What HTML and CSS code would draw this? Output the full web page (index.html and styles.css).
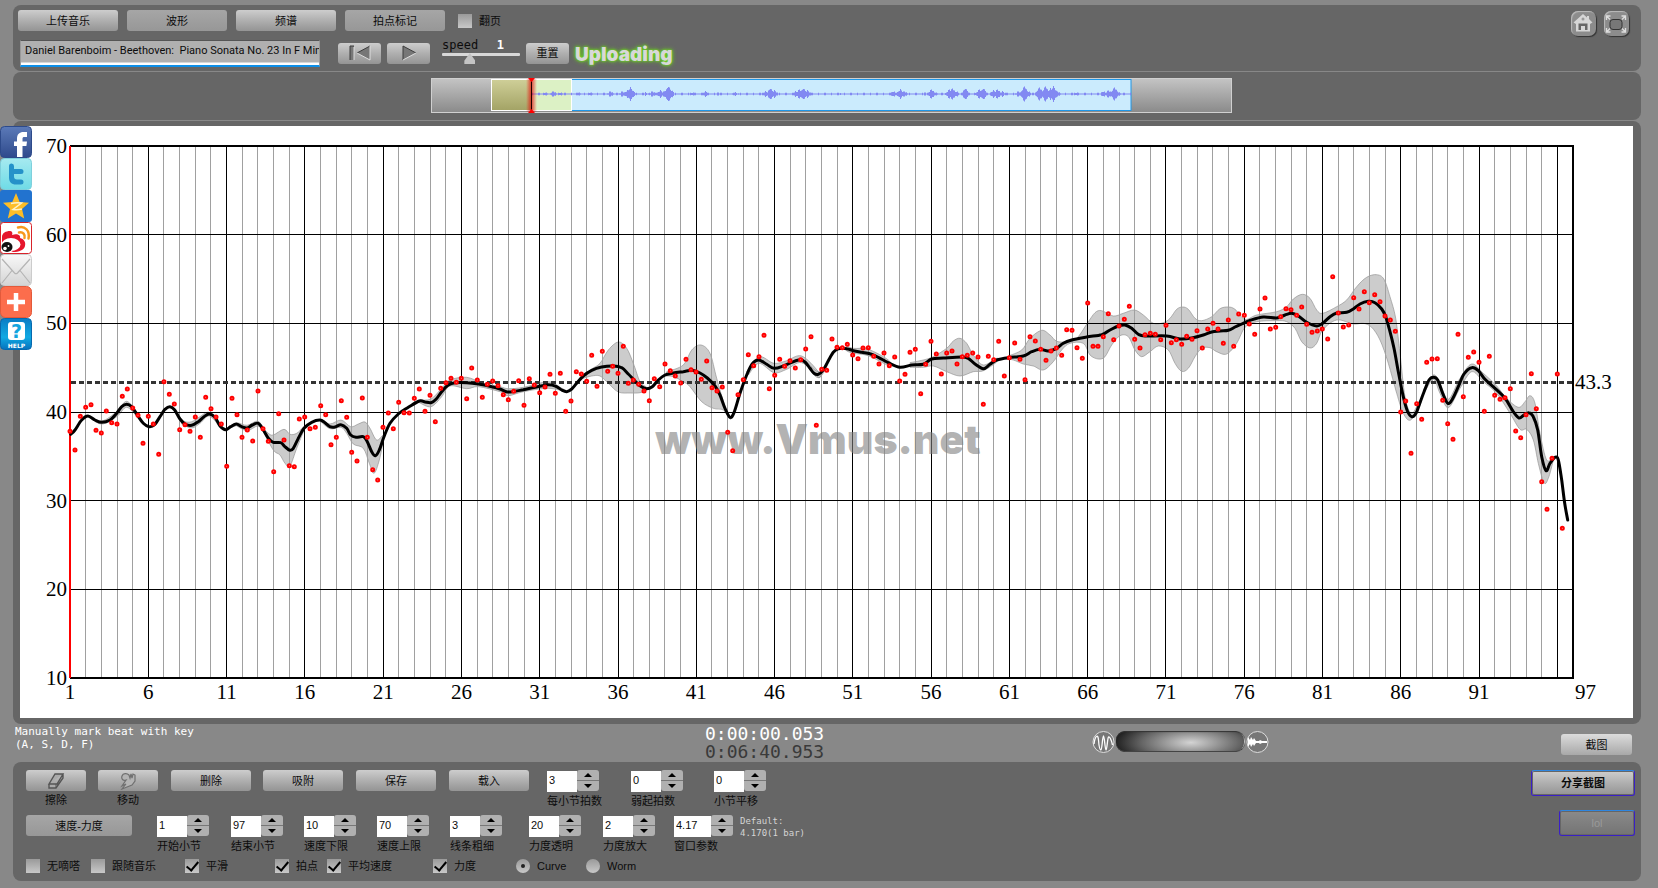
FILE: index.html
```
<!DOCTYPE html>
<html lang="zh">
<head>
<meta charset="utf-8">
<title>Vmus.net</title>
<link rel="stylesheet" href="styles.css">
</head>
<body>
<nav class="share" aria-label="Share">
  <a href="#facebook" aria-label="Facebook"><svg viewBox="0 0 32 32"><defs><linearGradient id="fb" x2="0" y2="1"><stop stop-color="#5b7ab8"/><stop offset="1" stop-color="#2f4a8c"/></linearGradient></defs><rect x=".5" y=".5" width="31" height="31" rx="4" fill="url(#fb)" stroke="#2d4a8a"/><path d="M17 31V20h-3v-4.500h3v-2.500c0-5 2.500-7 6.500-7H27v5h-2.500c-1.600 0-2 .6-2 2v2.500H27l-.6 4.500h-3.900v11z" fill="#fff"/></svg></a>
  <a href="#twitter" aria-label="Twitter"><svg viewBox="0 0 32 32"><defs><linearGradient id="tw" x2="0" y2="1"><stop stop-color="#a6eaf0"/><stop offset="1" stop-color="#6fdbe6"/></linearGradient></defs><rect x=".5" y=".5" width="31" height="31" rx="4" fill="url(#tw)" stroke="#7fd0dc"/><path d="M9 8a2.500 2.500 0 0 1 5 0v3h7a2.500 2.500 0 0 1 0 5h-7v2.500c0 2 1 3 3 3h4a2.500 2.500 0 0 1 0 5h-5c-4.500 0-7-2.500-7-7z" fill="#2592c9"/></svg></a>
  <a href="#qzone" aria-label="Qzone"><svg viewBox="0 0 32 32"><rect width="32" height="32" rx="3" fill="#2273cf"/><path d="M16 3l3.700 9 9.300.8-7 6.200 2.200 9.400L16 23.500 7.800 28.400 10 19l-7-6.200 9.300-.8z" fill="#fdbd27"/><path d="M11 13.500c4-.8 7-.8 10.500-.4L13 19.500c3 .4 5.500.3 9-.5" fill="none" stroke="#fff3c8" stroke-width="1.500"/></svg></a>
  <a href="#weibo" aria-label="Weibo"><svg viewBox="0 0 32 32"><rect x=".5" y=".5" width="31" height="31" rx="3" fill="#fff" stroke="#d8232a"/><path d="M2 15c0-4 4-6 8-6 2 0 3 2 2 4 5-2 9 0 8 3 4 1 6 4 5 8-1 4-6 6-12 6L2 24z" fill="#e6162d"/><ellipse cx="11" cy="22.500" rx="9.500" ry="6.500" fill="#fff"/><ellipse cx="7" cy="25" rx="5.500" ry="5" fill="#111"/><circle cx="5" cy="26.500" r="1.800" fill="#fff"/><circle cx="8.500" cy="24" r=".9" fill="#fff"/><path d="M18 5.500c7-2 12 3 10.500 11M19 10.500c4-1 6.500 2 5.500 5.500" fill="none" stroke="#f7981d" stroke-width="2.500" stroke-linecap="round"/></svg></a>
  <a href="#mail" aria-label="Mail"><svg viewBox="0 0 32 32"><defs><linearGradient id="ml" x2="0" y2="1"><stop stop-color="#f8f8f8"/><stop offset="1" stop-color="#d4d4d4"/></linearGradient></defs><rect x=".5" y=".5" width="31" height="31" rx="4" fill="url(#ml)" stroke="#ccc"/><path d="M2 5l12.500 14q1.500 1.500 3 0L30 5M2 29l10-12.500M30 29L20 16.500" fill="none" stroke="#b4b4b4" stroke-width="1.200"/></svg></a>
  <a href="#more" aria-label="More"><svg viewBox="0 0 32 32"><rect x=".5" y=".5" width="31" height="31" rx="5" fill="#fc6d4c" stroke="#e3593a"/><path d="M16 7v18M7 16h18" stroke="#fff" stroke-width="4.500"/></svg></a>
  <a href="#help" aria-label="Help"><svg viewBox="0 0 32 32"><defs><linearGradient id="hp" x2="0" y2="1"><stop stop-color="#0a7cc4"/><stop offset=".6" stop-color="#10a9e3"/><stop offset="1" stop-color="#0672bd"/></linearGradient></defs><rect x=".5" y=".5" width="31" height="31" rx="4" fill="url(#hp)" stroke="#0669ae"/><rect x="8" y="4" width="17" height="18" rx="3" fill="#fff"/><text class="help-mark" x="16.500" y="20">?</text><text class="help-word" x="16.500" y="29.500">HELP</text></svg></a>
</nav>

<header class="panel toolbar">
  <div class="toolbar-main">
    <div class="toolbar-row">
      <button class="btn wide">上传音乐</button>
      <button class="btn wide pressed">波形</button>
      <button class="btn wide">频谱</button>
      <button class="btn wide pressed">拍点标记</button>
      <label class="check flip"><input type="checkbox">翻页</label>
    </div>
    <div class="toolbar-row player">
      <input class="track-title" type="text" aria-label="Track" value="Daniel Barenboim - Beethoven:  Piano Sonata No. 23 In F Min">
      <button class="btn small" aria-label="Previous"><svg width="24" height="18" viewBox="0 0 24 18"><path d="M2 2h4v14H2zM22 2L9 9l13 7z" fill="#777"/><path d="M2 16V2h4M22 2L9 9" fill="none" stroke="#3c3c3c"/><path d="M6 3v13M22 2v14L9 9" fill="none" stroke="#ddd"/></svg></button>
      <button class="btn small" aria-label="Play"><svg width="24" height="18" viewBox="0 0 24 18"><path d="M6 2l13 7-13 7z" fill="#777"/><path d="M6 16V2l13 7" fill="none" stroke="#3c3c3c"/><path d="M19 9L6 16" stroke="#ddd"/></svg></button>
      <div class="speed">
        <div class="speed-head"><label for="speed">speed</label><output>1</output></div>
        <input id="speed" type="range" min="0" max="3" step="0.1" value="1">
      </div>
      <button class="btn small">重置</button>
      <span class="status">Uploading</span>
    </div>
  </div>
  <div class="window-tools">
    <button class="tool" aria-label="Home"><svg width="24" height="24" viewBox="0 0 24 24"><path d="M12 2L2.500 10.500 5 12v7.500h14V12l2.500-1.500L18 7V4h-2v1.500z" fill="#d6d6d6"/><path d="M7.500 18v-6.500h9V18h-2.500v-4h-4v4z" fill="#666"/><circle cx="12" cy="7" r="1.500" fill="#999"/></svg></button>
    <button class="tool" aria-label="Full screen"><svg width="24" height="24" viewBox="0 0 24 24"><rect x="6" y="7.500" width="12" height="10" rx="3" fill="#777" stroke="#333"/><path d="M2.500 8V4h4M17.500 4h4v4M21.500 16v4h-4M6.500 20h-4v-4M3 4.500l3 3M21 4.500l-3 3M3 19.500l3-3M21 19.500l-3-3" fill="none" stroke="#ddd" stroke-width="1.300"/></svg></button>
  </div>
</header>

<section class="panel overview">
  <svg id="overview" viewBox="431 78 801 35" width="801" height="35" role="img" aria-label="Waveform overview">
    <defs>
      <linearGradient id="trackFill" x2="0" y2="1"><stop stop-color="#c4c4c4"/><stop offset="1" stop-color="#8a8a8a"/></linearGradient>
      <linearGradient id="loopFill" x2="0" y2="1"><stop stop-color="#cfcf98"/><stop offset="1" stop-color="#a3a365"/></linearGradient>
      <linearGradient id="glow"><stop stop-color="#f00" stop-opacity="0"/><stop offset=".5" stop-color="#d00" stop-opacity=".7"/><stop offset="1" stop-color="#f00" stop-opacity="0"/></linearGradient>
    </defs>
    <rect x="431.500" y="78.500" width="800" height="34" fill="url(#trackFill)" stroke="#d0d0d0"/>
    <rect x="531" y="79.500" width="600" height="31" fill="#cbebfd" stroke="#1f97e8"/>
    <rect x="491.500" y="79.500" width="40" height="31" fill="url(#loopFill)"/>
    <rect x="531.500" y="79.500" width="40" height="31" fill="#dcf1c5"/>
    <rect x="491.500" y="79.500" width="80" height="31" fill="none" stroke="#fff"/>
    <path id="wave" fill="#8289f2"/>
    <rect x="526" y="79" width="11" height="33" fill="url(#glow)"/>
    <path d="M531.500 79v33" stroke="#200" /><path d="M528 78h7l-3.500 4zM528 113h7l-3.500-4z" fill="#f00"/>
  </svg>
</section>

<main class="panel chart-panel">
  <svg id="chart" viewBox="20 126 1613 592" role="img" aria-label="Tempo chart">
    <path id="bands" class="band"/>
    <path id="minor" class="grid-minor"/>
    <path id="major" class="grid-major"/>
    <path class="frame" d="M70 146H1573V678H70"/>
    <path class="cursor" d="M70 146V678"/>
    <text class="watermark" x="818" y="454">www.Vmus.net</text>
    <path class="average" d="M71 382.500H1575"/>
    <path id="curve" class="curve"/>
    <path id="beats" class="beat"/>
    <path id="beatCores" class="beat-core"/>
    <g id="labels" class="axis"></g>
    <text class="axis" x="1575" y="389">43.3</text>
  </svg>
</main>

<section class="strip">
  <p class="hint">Manually mark beat with key<br>(A, S, D, F)</p>
  <div class="clock"><time>0:00:00.053</time><time class="total">0:06:40.953</time></div>
  <div class="zoomer">
    <svg width="23" height="24" viewBox="0 0 23 24"><circle cx="11.500" cy="12" r="10.500" fill="#777" stroke="#ddd"/><path d="M2 14c1-8 4-11 4.500-4s1.500 10 2.500 10 1.500-14 2.500-14 1.500 14 2.500 14 1.500-12 2.500-13 3 3 4 8" fill="none" stroke="#fff" stroke-width="1.300"/></svg>
    <div class="wheel"></div>
    <svg width="23" height="24" viewBox="0 0 23 24"><circle cx="11.500" cy="12" r="10.500" fill="#777" stroke="#ddd"/><path d="M2 12V7l2 3 1-3 2 3 1-2 2 3h3l1-1 2 1h5v2h-5l-2 1-1-1h-3l-2 3-1-2-2 3-1-3-2 3z" fill="#fff"/></svg>
  </div>
  <button class="btn shot">截图</button>
</section>

<section class="panel controls">
  <div class="control-rows">
    <div class="row row-edit">
      <div class="field"><button class="btn icon-btn" aria-labelledby="erase"><svg width="22" height="18" viewBox="0 0 22 18"><path d="M4 12L10 2h8l-6 10zM4 12v4h7l7-10V2" fill="#aaa" stroke="#555" stroke-width="1.400"/><path d="M11 16v-4" stroke="#555"/></svg></button><span id="erase" class="center">擦除</span></div>
      <div class="field"><button class="btn icon-btn" aria-labelledby="move"><svg width="22" height="18" viewBox="0 0 22 18"><path d="M9 8c-3 1-5-1-4-4s5-3 7-1l1 3 1-4 1 4 1-4 2 1v6l-3 4-5 2-5 2 4-5-4 2z" fill="#b4b4b4" stroke="#707070" stroke-width="1.200"/></svg></button><span id="move" class="center">移动</span></div>
      <div><button class="btn medium">删除</button></div>
      <div><button class="btn medium">吸附</button></div>
      <div><button class="btn medium">保存</button></div>
      <div><button class="btn medium">载入</button></div>
      <div class="field"><span class="spin"><input id="f1" type="text" value="3"><span class="steps"><button aria-label="+"></button><button aria-label="-"></button></span></span><label for="f1">每小节拍数</label></div>
      <div class="field"><span class="spin"><input id="f2" type="text" value="0"><span class="steps"><button aria-label="+"></button><button aria-label="-"></button></span></span><label for="f2">弱起拍数</label></div>
      <div class="field"><span class="spin"><input id="f3" type="text" value="0"><span class="steps"><button aria-label="+"></button><button aria-label="-"></button></span></span><label for="f3">小节平移</label></div>
    </div>
    <div class="row row-range">
      <div><button class="btn mode pressed">速度-力度</button></div>
      <div class="field"><span class="spin"><input id="g1" type="text" value="1"><span class="steps"><button aria-label="+"></button><button aria-label="-"></button></span></span><label for="g1">开始小节</label></div>
      <div class="field"><span class="spin"><input id="g2" type="text" value="97"><span class="steps"><button aria-label="+"></button><button aria-label="-"></button></span></span><label for="g2">结束小节</label></div>
      <div class="field"><span class="spin"><input id="g3" type="text" value="10"><span class="steps"><button aria-label="+"></button><button aria-label="-"></button></span></span><label for="g3">速度下限</label></div>
      <div class="field"><span class="spin"><input id="g4" type="text" value="70"><span class="steps"><button aria-label="+"></button><button aria-label="-"></button></span></span><label for="g4">速度上限</label></div>
      <div class="field"><span class="spin"><input id="g5" type="text" value="3"><span class="steps"><button aria-label="+"></button><button aria-label="-"></button></span></span><label for="g5">线条粗细</label></div>
      <div class="field"><span class="spin"><input id="g6" type="text" value="20"><span class="steps"><button aria-label="+"></button><button aria-label="-"></button></span></span><label for="g6">力度透明</label></div>
      <div class="field"><span class="spin"><input id="g7" type="text" value="2"><span class="steps"><button aria-label="+"></button><button aria-label="-"></button></span></span><label for="g7">力度放大</label></div>
      <div class="field"><span class="spin long"><input id="g8" type="text" value="4.17"><span class="steps"><button aria-label="+"></button><button aria-label="-"></button></span></span><label for="g8">窗口参数</label></div>
      <p class="default">Default:<br>4.170(1 bar)</p>
    </div>
    <div class="row row-flags">
      <label class="check"><input type="checkbox">无嘀嗒</label>
      <label class="check"><input type="checkbox">跟随音乐</label>
      <label class="check"><input type="checkbox" checked>平滑</label>
      <label class="check"><input type="checkbox" checked>拍点</label>
      <label class="check"><input type="checkbox" checked>平均速度</label>
      <label class="check"><input type="checkbox" checked>力度</label>
      <label class="check"><input type="radio" name="view" checked>Curve</label>
      <label class="check"><input type="radio" name="view">Worm</label>
    </div>
  </div>
  <div class="actions">
    <button class="btn ring share-shot">分享截图</button>
    <button class="btn ring lol" disabled>lol</button>
  </div>
</section>
<script src="chart.js"></script>
</body>
</html>
```
FILE: styles.css
```
* { box-sizing: border-box; }

body {
  margin: 0;
  padding: 5px 17px 7px 13px;
  min-height: 100vh;
  display: flex;
  flex-direction: column;
  gap: 1px;
  position: relative;
  background: #888;
  color: #0c0c0c;
  font-family: "Liberation Sans", "Noto Sans CJK SC", sans-serif;
  font-size: 11px;
}

p { margin: 0; }
button, input { font: inherit; color: inherit; }
button { border: 0; padding: 0; }
svg { display: block; }

.panel { background: #666; border-radius: 8px; }

.share { position: absolute; left: 0; top: 126px; width: 32px; z-index: 1; }
.share a { display: block; }
.help-mark { font: bold 19px "DejaVu Sans", sans-serif; fill: #13a5df; text-anchor: middle; }
.help-word { font: bold 6px "DejaVu Sans", sans-serif; fill: #fff; text-anchor: middle; }

.btn {
  height: 21px;
  border-radius: 3px;
  background: linear-gradient(#cdcdcd, #b2b2b2 45%, #949494);
  display: flex;
  align-items: center;
  justify-content: center;
  line-height: 16px;
}
.pressed { background: linear-gradient(#a6a6a6, #979797); }
.wide { width: 100px; }
.medium { width: 80px; }
.icon-btn { width: 60px; }
.small { width: 43px; }
.mode { width: 106px; }
.shot { width: 71px; background: linear-gradient(#dcdcdc, #a8a8a8); }

.toolbar { display: flex; justify-content: space-between; padding: 5px; }
.toolbar-main { display: flex; flex-direction: column; gap: 9px; }
.toolbar-row { display: flex; align-items: center; gap: 9px; }
.flip { margin-left: 4px; }
.player { height: 26px; gap: 6px; padding-left: 2px; }
.track-title {
  width: 300px;
  height: 27px;
  margin-right: 12px;
  padding: 0 0 4px 4px;
  border: 1px solid #999;
  border-top-color: #555;
  border-bottom: 2px solid #0d8fe8;
  background: linear-gradient(#b0b0b0, #b0b0b0 21px, #fff 22px);
  font-family: Roboto, "Noto Sans CJK SC", sans-serif;
}
.speed { width: 78px; margin: 0 0 0 6px; height: 27px; }
.speed-head {
  display: flex;
  justify-content: space-between;
  width: 62px;
  font: 12px/11px "DejaVu Sans Mono", monospace;
}
.speed-head output { color: #fff; font-weight: bold; }
.speed input { display: block; appearance: none; width: 78px; height: 8px; margin: 0; background: none; }
.speed input::-webkit-slider-runnable-track { height: 3px; background: #d8d8d8; border-radius: 1px; }
.speed input::-webkit-slider-thumb {
  appearance: none;
  width: 11px;
  height: 11px;
  background: #c4c4c4;
  clip-path: polygon(50% 0, 100% 70%, 100% 100%, 0 100%, 0 70%);
}
.status {
  font-family: Inter, "Liberation Sans", sans-serif;
  font-weight: 900;
  font-size: 19px;
  line-height: 22px;
  padding-top: 3px;
  color: #d8d8d8;
  text-shadow: 0 0 2px #6bd022, 0 0 3px #6bd022, 0 0 5px #6bd022;
}
.window-tools { display: flex; gap: 8px; padding: 1px 7px; }
.tool {
  width: 25px;
  height: 25px;
  border-radius: 7px;
  background: #8c8c8c;
  box-shadow: inset 1px 1px 1px #bbb, 1px 1px 1px #333;
}

.overview { display: flex; justify-content: center; padding: 6px 0 7px 9px; }
.chart-panel { padding: 5px 8px 6px 7px; }
#chart { width: 100%; height: auto; background: #fff; }

.grid-minor { stroke: #a0a0a0; shape-rendering: crispEdges; }
.grid-major { stroke: #000; shape-rendering: crispEdges; }
.frame { fill: none; stroke: #000; stroke-width: 2; }
.cursor { stroke: #f00; stroke-width: 2; }
.band { fill: #000; fill-opacity: .2; stroke: #888; stroke-opacity: .6; }
.curve { fill: none; stroke: #000; stroke-width: 3; stroke-linecap: round; stroke-linejoin: round; }
.average { stroke: #333; stroke-width: 3; stroke-dasharray: 5 3; }
.beat { stroke: #f00; stroke-width: 5; stroke-linecap: round; }
.beat-core { stroke: #f99; stroke-width: 1; stroke-linecap: round; }
.axis { font-family: "Liberation Serif", serif; font-size: 21px; fill: #000; }
.watermark {
  font-family: Inter, sans-serif;
  font-weight: 900;
  font-size: 41px;
  fill: #808080;
  fill-opacity: .6;
  text-anchor: middle;
}

.strip {
  display: grid;
  grid-template-columns: 690fr 387fr 469fr auto;
  height: 36px;
  padding: 0 9px 0 2px;
}
.hint { color: #fff; font: 11px/13px "DejaVu Sans Mono", monospace; }
.clock { font: 18px/18px "DejaVu Sans Mono", monospace; color: #fff; }
.clock time { display: block; }
.clock .total { color: #3a3a3a; }
.zoomer { display: flex; align-items: flex-start; gap: 1px; padding-top: 5px; }
.wheel {
  width: 129px;
  height: 21px;
  margin-top: 1px;
  border-radius: 9px;
  background: radial-gradient(ellipse 75px 24px at 58% 55%, #d4d4d4, #666 65%, #222);
  box-shadow: inset 0 1px 1px #333, inset 0 -1px 0 #444, inset -1px 0 0 #ccc;
}
.shot { margin-top: 9px; }

.controls { display: flex; justify-content: space-between; padding: 8px 6px 7px 13px; height: 119px; }
.row { display: grid; justify-items: start; align-items: start; }
.row-edit { grid-template-columns: 72px 73px 92px 93px 93px 98px 84px 83px 60px; height: 45px; }
.row-range { grid-template-columns: 131px 74px 73px 73px 73px 79px 74px 71px 66px auto; height: 44px; }
.row-flags { grid-template-columns: 65px 94px 90px 52px 106px 83px 70px auto; }
.field { display: flex; flex-direction: column; line-height: 18px; white-space: nowrap; }
.field label, .field .center { height: 18px; }
.field .center { text-align: center; }
.spin { display: flex; width: 52px; height: 22px; }
.spin.long { width: 59px; }
.spin input { flex: 1; min-width: 0; margin: 1px 0 0; padding: 0 2px 4px; border: 0; background: #fff; }
.steps { display: grid; width: 22px; height: 21px; gap: 1px; background: #777; border-radius: 3px; overflow: hidden; }
.steps button { background: #b0b0b0; display: flex; align-items: center; justify-content: center; }
.steps button::before { content: ""; border: 4px solid transparent; border-top: 0; border-bottom: 4px solid #000; }
.steps button:last-child::before { transform: rotate(180deg); }
.default { color: #d4d4d4; font: 9px/12px "DejaVu Sans Mono", monospace; }

.check { display: flex; align-items: center; gap: 7px; line-height: 14px; white-space: nowrap; }
.check input {
  appearance: none;
  width: 14px;
  height: 14px;
  margin: 0;
  background: linear-gradient(#9a9a9a, #c8c8c8);
  display: grid;
  place-items: center;
}
.check input[type="radio"] { border-radius: 50%; }
.check input[type="radio"]:checked::before { content: ""; width: 4px; height: 4px; border-radius: 50%; background: #222; }
.check input[type="checkbox"]:checked::before {
  content: "";
  width: 5px;
  height: 10px;
  margin-bottom: 3px;
  border: solid #000;
  border-width: 0 2px 2px 0;
  transform: rotate(40deg);
}

.actions { display: flex; flex-direction: column; align-items: flex-end; gap: 14px; }
.ring {
  height: 26px;
  border: 1px solid #3a1fc8;
  border-top-color: #2f86e0;
  box-shadow: inset 0 0 0 1px #666;
}
.share-shot { width: 104px; font-weight: bold; }
.lol { width: 76px; background: linear-gradient(#8a8a8a, #747474); color: #9a9a9a; }
```
FILE: chart.js
```
// Traces are stored in tiles: [originX, originY, x, y, x, y, ...], three units per pixel.
const unpack = tiles => tiles.flatMap(([ox, oy, ...v]) => {
  const out = [];
  for (let i = 0; i < v.length; i += 2) out.push([ox + v[i] / 3, oy + v[i + 1] / 3]);
  return out;
});

const fmt = p => p[0].toFixed(1) + " " + p[1].toFixed(1);

// Catmull-Rom spline through the points.
function spline(pts) {
  let d = "";
  for (let i = 0; i < pts.length - 1; i++) {
    const a = pts[i - 1] || pts[i], b = pts[i], c = pts[i + 1], e = pts[i + 2] || c;
    d += "C" + fmt([b[0] + (c[0] - a[0]) / 6, b[1] + (c[1] - a[1]) / 6]) + " " +
      fmt([c[0] - (e[0] - b[0]) / 6, c[1] - (e[1] - b[1]) / 6]) + " " + fmt(c);
  }
  return d;
}
const set = (id, d) => document.getElementById(id).setAttribute("d", d);

const curve = unpack([
  [0, 120, 212,943,225,930,245,900,264,888,285,900,305,907,330,900,350,880,365,860,380,853,395,860,412,885,430,910,447,920,463,915,480,890,495,868,510,860,524,870,540,897,555,912,575,916,595,905,612,890,628,882,645,892,660,918,677,929,692,920,709,912,725,920,741,924,757,915,775,910,790,930,805,955,820,967,842,968,855,980,870,991,880,985,895,955,912,925,935,907,960,900,975,908,990,920,1005,921,1023,914,1040,925,1052,945,1068,952,1090,950,1102,965,1115,995,1126,1007,1138,990,1152,950,1170,910,1195,882,1225,862],
  [400, 300, 58,303,75,306,93,308,108,298,125,275,145,255,165,248,200,248,235,252,275,260,300,267,322,276,345,274,370,269,410,261,445,254,468,259,485,270,500,275,515,267,530,250,550,228,575,211,605,201,640,198,665,203,685,222,705,243,722,259,740,266,757,260,775,240,795,225,820,219,850,215,877,211,900,219,922,234,945,258,960,285,975,325,990,352,1002,338,1020,280,1040,225,1058,190,1077,180,1100,193,1122,205,1150,198,1175,187,1200,179],
  [800, 240, 15,366,30,385,42,400,55,403,70,390,85,362,100,337,115,326,140,326,160,332,185,337,210,341,235,352,265,368,300,382,335,375,370,373,395,357,430,354,485,351,505,355,525,372,550,386,570,373,590,360,625,353,670,348,695,335,720,328,745,333,770,325,790,310,815,300,860,291,905,284,930,270,955,258,975,255,995,265,1015,283,1035,288,1100,288,1140,297,1175,294,1210,285,1235,276],
  [1220, 240, 0,273,25,271,45,261,65,252,90,241,130,231,170,234,195,225,215,220,235,228,260,247,290,258,308,250,330,230,350,219,380,217,400,207,420,192,445,184,465,188,485,207,497,230,510,275,522,325,535,395,550,470,562,512,575,530,588,520,600,488,615,448,627,420,640,412,653,420,668,460,683,490,697,478,715,440,732,402,755,383,775,392,795,418,825,445,855,475,880,515,897,534,912,525,927,518,940,530,953,570,965,650,978,692,990,670,1005,652,1015,660,1025,720,1034,790,1043,840]
]);
set("curve", "M" + fmt(curve[0]) + spline(curve));

// Each band is an outline: upper edge left to right, then lower edge back.
const bands = [
  [[0, 120, 264,886,305,903,350,875,380,844,412,880,412,890,380,862,350,890,305,912,264,890]],
  [[0, 120, 540,893,555,905,575,905,600,890,628,877,660,910,660,920,628,888,600,910,575,924,545,912]],
  [[0, 120, 677,928,709,909,741,916,773,903,790,925,790,932,773,918,741,932,709,917]],
  [[0, 120, 790,925,805,940,820,945,852,928,870,943,890,940,912,920,912,930,890,985,870,1038,855,1030,840,1005,820,990,790,935]],
  [[0, 120, 960,900,990,912,1023,900,1052,920,1075,912,1095,906,1110,925,1130,960,1150,945,1150,960,1138,1020,1122,1060,1108,1030,1090,985,1060,972,1040,940,1023,922,990,926,960,902]],
  [[400, 300, 58,300,93,297,125,265,150,240,200,232,250,250,300,260,325,266,370,262,445,245,480,262,500,275,445,265,370,275,325,287,300,275,235,260,200,266,150,258,125,290,93,320,58,308]],
  [[400, 300, 545,232,575,207,600,190,625,150,655,126,680,145,700,190,720,245,740,262,740,270,720,278,690,279,655,276,625,250,600,228,575,228,550,235]],
  [[400, 300, 800,215,850,195,875,150,903,135,930,160,950,235,975,320,990,350,990,357,970,330,940,325,905,305,870,260,850,245,820,230,795,228]],
  [[400, 300, 1040,215,1077,170,1122,190,1160,182,1205,168,1255,215,1255,232,1205,188,1160,208,1122,218,1077,190,1045,225]],
  [[800, 240, 15,360,55,395,85,360,85,370,55,413,15,370]],
  [[800, 240, 140,318,160,325,205,328,265,360,265,376,205,347,160,340,140,333]],
  [[800, 240, 330,368,370,360,400,350,440,325,460,303,480,295,500,310,520,345,550,375,590,355,590,366,550,392,520,395,480,408,440,395,400,378,370,382,330,382]],
  [[800, 240, 625,348,665,330,690,295,725,271,750,285,770,304,800,305,830,295,862,250,885,218,905,212,940,228,970,220,1003,210,1030,225,1060,250,1090,248,1110,235,1130,208,1148,201,1165,208,1185,235,1205,242,1235,230],
   [1220, 240, 0,206,25,201,45,208,75,238,110,225,170,215,200,200,220,177,247,163,270,175,290,210,308,220,350,200,380,180,410,140,440,112,470,104,492,118,510,170,527,235,540,340,555,470,575,520,600,480,600,495,572,540,550,520,530,460,505,370,480,300,455,262,430,250,400,252,350,240,308,270,290,310,270,324,245,305,225,265,200,245,170,242,110,245,75,262,50,310,20,342],
   [800, 240, 1250,335,1230,323,1205,325,1185,350,1165,385,1145,394,1125,370,1105,330,1075,318,1050,335,1025,350,1005,330,985,290,960,287,935,315,915,350,895,357,870,345,850,310,810,310,785,330,760,365,730,390,700,378,670,372,640,360,620,358]],
  [[1220, 240, 610,450,640,405,660,430,685,478,720,415,755,372,790,400,830,438,860,475,895,502,915,485,930,467,945,490,960,580,980,660,1000,650,1000,660,985,715,972,728,955,670,940,600,920,568,900,568,870,520,830,460,790,425,755,395,720,445,685,503,660,460,640,418,612,460]]
];
set("bands", bands.map(b => {
  const p = unpack(b);
  return "M" + fmt(p[0]) + spline(p) + "Z";
}).join(""));

const beats = unpack([
  [0, 120, 210,934,225,990,241,889,257,862,273,854,288,931,304,939,319,873,335,908,351,912,367,829,382,807,398,864,414,886,429,970,445,889,460,912,476,1003,492,785,508,823,523,852,539,929,555,914,570,934,586,891,601,952,617,832,633,866,648,891,664,912,680,1039,696,835,711,884,726,952,742,930,758,963,774,813,789,926,805,964,821,1055,836,881,852,960,868,1037,883,1040,898,897,914,891,930,926,946,922,962,857,977,884,993,974,1009,952,1024,842,1040,892,1055,997,1071,1023,1087,834,1102,952,1118,1049,1133,1080,1149,922,1165,879,1180,926,1196,847,1212,878,1228,879,1243,835,1258,807],
  [400, 300, 75,334,90,286,106,365,122,265,138,248,153,235,169,247,184,235,200,296,215,204,232,240,247,292,262,253,278,243,294,257,310,284,325,299,341,274,356,242,372,316,388,236,403,255,419,278,435,261,450,223,466,280,481,220,497,334,513,303,529,215,544,222,560,244,575,166,591,259,607,154,623,214,638,199,654,220,670,139,685,250,700,240,716,253,732,273,748,302,763,236,779,260,795,192,811,212,826,228,842,249,858,178,873,209,888,216,904,238,920,183,936,263,951,273,967,261,983,397,998,452,1014,284,1030,239,1045,164,1061,197,1077,170,1092,106,1108,266,1124,226,1139,178,1154,199,1170,182,1186,204,1202,179,1217,147,1233,110,1249,376],
  [800, 240, 65,388,80,391,96,297,111,322,127,323,142,313,158,345,174,356,189,324,205,323,221,349,237,372,252,339,268,377,284,351,299,423,315,403,330,337,346,328,362,461,377,373,393,304,409,342,424,402,440,339,456,333,471,372,487,350,502,346,518,339,534,351,550,493,565,349,581,359,596,304,613,408,628,353,644,309,660,358,675,419,690,290,706,303,722,328,738,361,753,333,769,324,785,346,800,269,816,271,831,323,847,355,863,189,879,319,894,319,910,290,925,221,941,299,957,258,973,238,988,199,1004,298,1020,324,1035,284,1051,280,1066,283,1082,299,1098,256,1114,308,1129,299,1145,313,1160,289,1176,298,1191,272,1207,324,1223,267,1239,250,1254,267,1270,310,1285,240,1301,319,1316,222],
  [1220, 240, 73,226,88,252,104,283,120,207,135,174,151,267,167,262,182,230,198,206,213,209,230,226,245,201,260,253,276,277,292,273,307,267,323,297,338,110,355,219,370,261,386,255,401,173,417,207,433,155,448,188,464,164,480,185,495,228,511,240,526,274,542,516,557,483,573,640,590,491,605,538,620,367,636,357,652,356,668,481,683,551,699,598,714,283,730,470,745,352,761,336,777,367,793,514,808,349,824,466,840,478,855,473,871,446,887,573,902,593,918,524,934,401,949,506,965,725,981,808,996,655,1012,402,1027,865]
]);
const dots = beats.map(p => "M" + fmt(p) + "h.01").join("");
set("beats", dots);
set("beatCores", dots);

// Grid: one line per bar, a dark one every five bars; tempo 10 to 70.
const barX = bar => 70 + (bar - 1) * 1503 / 96;
const tempoY = t => 678 - (t - 10) * 532 / 60;
let minor = "", major = "";
const labels = document.getElementById("labels");
function label(x, y, text, anchor) {
  const t = document.createElementNS("http://www.w3.org/2000/svg", "text");
  t.setAttribute("x", x);
  t.setAttribute("y", y);
  t.setAttribute("text-anchor", anchor);
  t.textContent = text;
  labels.append(t);
}
for (let bar = 1; bar < 97; bar++) {
  const line = "M" + barX(bar).toFixed(1) + " 146V678";
  if (bar % 5 === 1) major += line; else minor += line;
  if (bar % 5 === 1 && bar < 96) label(barX(bar), 699, bar, "middle");
}
label(1575, 699, 97, "start");
for (let t = 10; t <= 70; t += 10) {
  if (t > 10 && t < 70) major += "M70 " + tempoY(t).toFixed(1) + "H1573";
  label(67, tempoY(t) + 7, t, "end");
}
set("minor", minor);
set("major", major);

// Overview waveform: [x, half height] peaks over a thin base line.
const peaks = [[545,2],[553,3],[560,2],[578,2],[590,2],[610,3],[622,3],[627,4],[630,7],[633,3],[645,2],[652,3],[660,4],[665,4],[668,8],[671,4],[692,2],[705,3],[718,2],[735,2],[765,3],[770,6],[774,4],[795,3],[799,5],[803,6],[807,4],[840,1],[893,3],[900,5],[904,3],[925,2],[931,5],[935,2],[949,5],[952,6],[956,3],[965,6],[979,5],[983,6],[993,4],[997,5],[1002,3],[1018,3],[1024,8],[1028,3],[1039,7],[1045,8],[1050,6],[1053,8],[1057,3],[1076,2],[1103,3],[1108,4],[1114,7],[1117,3]];
let wave = "";
for (let x = 532; x < 1131; x++) {
  let h = .5 + (x * 7919 % 13 > 9 ? .7 : 0);
  for (const [px, a] of peaks) h = Math.max(h, a - Math.abs(x - px) * a / 5 - (x * 31 % 3) * .5);
  wave += "M" + x + " " + (94 - h).toFixed(1) + "h1v" + (2 * h).toFixed(1) + "h-1z";
}
set("wave", wave);
```
